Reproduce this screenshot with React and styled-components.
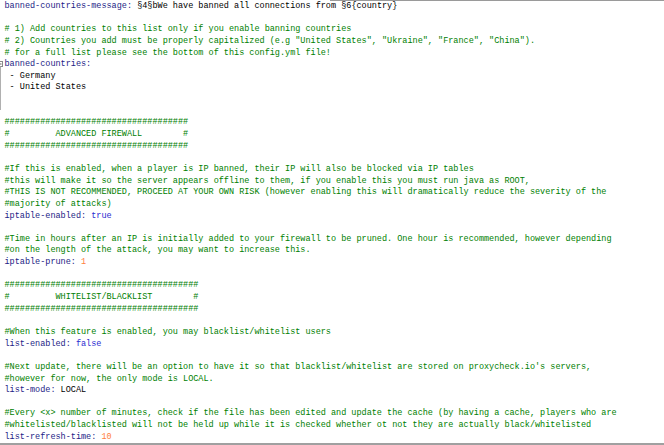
import React from "react";
import styled, { createGlobalStyle } from "styled-components";

const Global = createGlobalStyle`
  html, body { margin: 0; padding: 0; background: #ffffff; }
  #root { width: 664px; height: 445px; overflow: hidden; }
`;

const Editor = styled.div`
  position: relative;
  width: 664px;
  height: 445px;
  box-sizing: border-box;
  background: #ffffff;
  padding-top: 1px;
  display: flex;
  flex-direction: column;
  font-family: "Liberation Mono", "Courier New", monospace;
  font-size: 8.5px;
  border-bottom: 2px solid #a0a0a0;
  &::before {
    content: "";
    position: absolute;
    top: 0;
    left: 330px;
    right: 0;
    height: 1px;
    background: #9a9a9a;
  }
`;

const Row = styled.div`
  display: flex;
  align-items: stretch;
  height: 11.65px;
  line-height: 11.65px;
  white-space: pre;
`;

const Gutter = styled.div`
  width: 4px;
  flex: none;
  display: flex;
`;

const Code = styled.div`
  padding-left: 0.5px;
  color: #000000;
`;

const Key = styled.span`
  color: #1d1d86;
`;
const Comment = styled.span`
  color: #008000;
`;
const Num = styled.span`
  color: #ff8040;
`;
const Bool = styled.span`
  color: #2a2ad0;
`;

function FoldMark({ kind }) {
  if (kind === "box")
    return (
      <svg width="4" height="12" viewBox="0 0 4 12">
        <rect x="-2.5" y="2.5" width="5" height="5" fill="#fff" stroke="#8a8a8a" strokeWidth="1" />
        <line x1="-1" y1="5" x2="1.5" y2="5" stroke="#606060" strokeWidth="1" />
        <line x1="0.5" y1="7.5" x2="0.5" y2="12" stroke="#b0b0b0" strokeWidth="1" />
      </svg>
    );
  if (kind === "line")
    return (
      <svg width="4" height="12" viewBox="0 0 4 12">
        <line x1="0.5" y1="0" x2="0.5" y2="12" stroke="#b0b0b0" strokeWidth="1" />
      </svg>
    );
  if (kind === "end")
    return (
      <svg width="4" height="12" viewBox="0 0 4 12">
        <line x1="0.5" y1="0" x2="0.5" y2="4" stroke="#b0b0b0" strokeWidth="1" />
      </svg>
    );
  return null;
}

const Line = ({ fold, children }) => (
  <Row>
    <Gutter>
      <FoldMark kind={fold} />
    </Gutter>
    <Code>{children || " "}</Code>
  </Row>
);

export default function App() {
  return (
    <>
      <Global />
      <Editor>
        <Line>
          <Key>banned-countries-message:</Key> §4§bWe have banned all connections from §6{"{country}"}
        </Line>
        <Line />
        <Line>
          <Comment># 1) Add countries to this list only if you enable banning countries</Comment>
        </Line>
        <Line>
          <Comment># 2) Countries you add must be properly capitalized (e.g "United States", "Ukraine", "France", "China").</Comment>
        </Line>
        <Line>
          <Comment># for a full list please see the bottom of this config.yml file!</Comment>
        </Line>
        <Line fold="box">
          <Key>banned-countries:</Key>
        </Line>
        <Line fold="line"> - Germany</Line>
        <Line fold="line"> - United States</Line>
        <Line fold="line" />
        <Line fold="end" />
        <Line>
          <Comment>####################################</Comment>
        </Line>
        <Line>
          <Comment>#         ADVANCED FIREWALL        #</Comment>
        </Line>
        <Line>
          <Comment>####################################</Comment>
        </Line>
        <Line />
        <Line>
          <Comment>#If this is enabled, when a player is IP banned, their IP will also be blocked via IP tables</Comment>
        </Line>
        <Line>
          <Comment>#this will make it so the server appears offline to them, if you enable this you must run java as ROOT,</Comment>
        </Line>
        <Line>
          <Comment>#THIS IS NOT RECOMMENDED, PROCEED AT YOUR OWN RISK (however enabling this will dramatically reduce the severity of the</Comment>
        </Line>
        <Line>
          <Comment>#majority of attacks)</Comment>
        </Line>
        <Line>
          <Key>iptable-enabled:</Key> <Bool>true</Bool>
        </Line>
        <Line />
        <Line>
          <Comment>#Time in hours after an IP is initially added to your firewall to be pruned. One hour is recommended, however depending</Comment>
        </Line>
        <Line>
          <Comment>#on the length of the attack, you may want to increase this.</Comment>
        </Line>
        <Line>
          <Key>iptable-prune:</Key> <Num>1</Num>
        </Line>
        <Line />
        <Line>
          <Comment>######################################</Comment>
        </Line>
        <Line>
          <Comment>#         WHITELIST/BLACKLIST        #</Comment>
        </Line>
        <Line>
          <Comment>######################################</Comment>
        </Line>
        <Line />
        <Line>
          <Comment>#When this feature is enabled, you may blacklist/whitelist users</Comment>
        </Line>
        <Line>
          <Key>list-enabled:</Key> <Bool>false</Bool>
        </Line>
        <Line />
        <Line>
          <Comment>#Next update, there will be an option to have it so that blacklist/whitelist are stored on proxycheck.io's servers,</Comment>
        </Line>
        <Line>
          <Comment>#however for now, the only mode is LOCAL.</Comment>
        </Line>
        <Line>
          <Key>list-mode:</Key> LOCAL
        </Line>
        <Line />
        <Line>
          <Comment>#Every &lt;x&gt; number of minutes, check if the file has been edited and update the cache (by having a cache, players who are</Comment>
        </Line>
        <Line>
          <Comment>#whitelisted/blacklisted will not be held up while it is checked whether ot not they are actually black/whitelisted</Comment>
        </Line>
        <Line>
          <Key>list-refresh-time:</Key> <Num>10</Num>
        </Line>
      </Editor>
    </>
  );
}
